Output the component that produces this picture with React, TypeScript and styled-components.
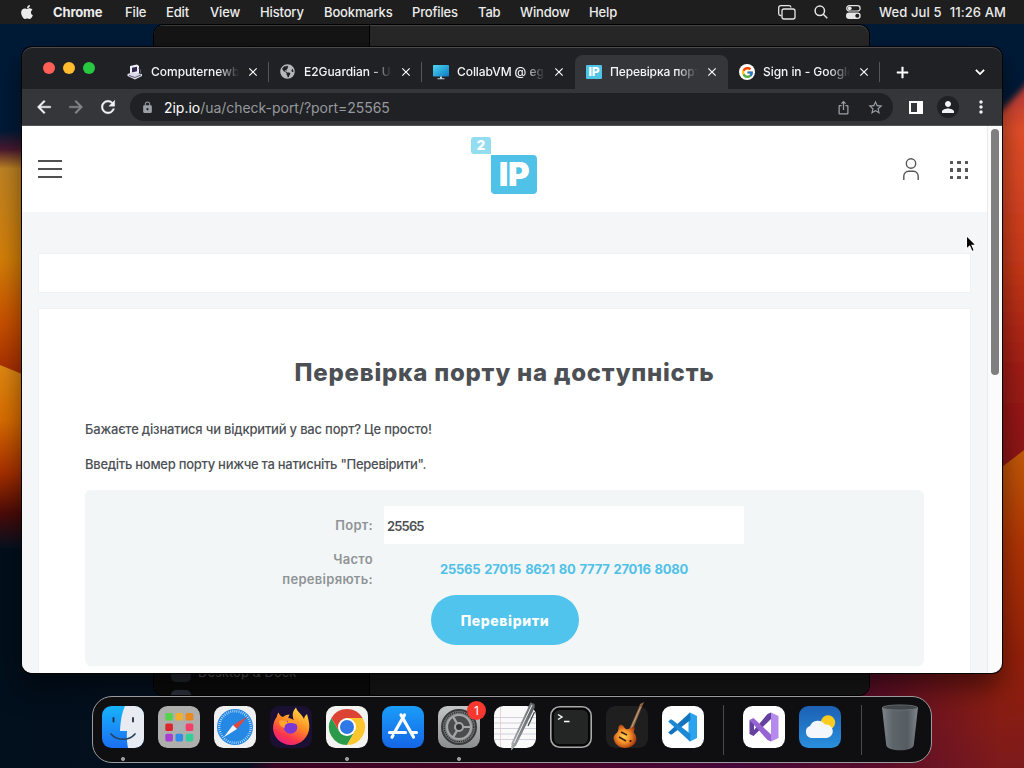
import React from "react";
import styled, { createGlobalStyle } from "styled-components";
import { FaApple, FaGlobeAmericas } from "react-icons/fa";
import { FcGoogle } from "react-icons/fc";
import {
  MdAdd,
  MdArrowBack,
  MdArrowForward,
  MdClose,
  MdExpandMore,
  MdIosShare,
  MdLock,
  MdMoreVert,
  MdPerson,
  MdRefresh,
  MdStarBorder,
} from "react-icons/md";

const GlobalStyle = createGlobalStyle`
  * { box-sizing: border-box; }
  body { margin: 0; overflow: hidden; background: #00142b; }
  button, input { font: inherit; border: 0; padding: 0; margin: 0; background: none; color: inherit; }
`;

const Desktop = styled.div`
  position: relative;
  width: 1024px;
  height: 768px;
  overflow: hidden;
  font-family: Inter, "Liberation Sans", sans-serif;
`;

const WallpaperSvg = styled.svg`
  position: absolute;
  inset: 0;
`;

/* ---------- menu bar ---------- */

const MenuBar = styled.header`
  position: relative;
  display: flex;
  align-items: center;
  height: 24px;
  padding: 0 18px 0 19px;
  background: #1e1e1f;
  color: #ececec;
  font-size: 13px;
  font-weight: 500;
  white-space: nowrap;
`;

const AppleMark = styled.span`
  display: flex;
  width: 34px;
  font-size: 16px;
`;

const MenuItem = styled.span<{ $w: number; $bold?: boolean; $ls?: number }>`
  width: ${(p) => p.$w}px;
  font-weight: ${(p) => (p.$bold ? 700 : 500)};
  letter-spacing: ${(p) => p.$ls ?? -0.15}px;
`;

const MenuStatus = styled.div`
  display: flex;
  align-items: center;
  margin-left: auto;
`;

const StatusIcon = styled.svg<{ $gap: number }>`
  display: block;
  margin-right: ${(p) => p.$gap}px;
`;

const Clock = styled.span`
  display: flex;
  gap: 8px;
  letter-spacing: 0.11px;
`;

/* ---------- windows ---------- */

const SettingsWindow = styled.section`
  position: absolute;
  left: 154px;
  top: 25px;
  width: 715px;
  height: 670px;
  display: flex;
  border-radius: 10px;
  overflow: hidden;
  background: linear-gradient(#272728, #1c1c1c 90%, #151515);
  box-shadow: 0 0 0 1px #000, inset 0 1px 0 #444;
`;

const SettingsSidebar = styled.div`
  display: flex;
  flex-direction: column;
  justify-content: flex-end;
  width: 216px;
  padding: 0 17px;
  background: linear-gradient(#151515, #0b0b0b);
  border-right: 1px solid #000;
  box-shadow: inset 0 1px 0 #3a3a3a;
`;

const SidebarEntry = styled.div`
  display: flex;
  align-items: center;
  gap: 7px;
  height: 28px;
  color: #56565a;
  font-size: 13px;
  transform: translateY(19px);
`;

const SidebarBadge = styled.span<{ $color: string }>`
  width: 20px;
  height: 20px;
  border-radius: 5px;
  background: ${(p) => p.$color};
`;

const BrowserWindow = styled.section`
  position: absolute;
  left: 22px;
  top: 47px;
  width: 980px;
  height: 626px;
  display: flex;
  flex-direction: column;
  border-radius: 10px;
  overflow: hidden;
  background: #202124;
`;

const WindowShadow = styled.div`
  position: absolute;
  left: 22px;
  top: 47px;
  width: 980px;
  height: 626px;
  border-radius: 10px;
  box-shadow: 0 0 0 1px #050505, 0 14px 28px rgba(0, 0, 0, 0.5);
`;

const TabStrip = styled.div`
  display: flex;
  align-items: flex-end;
  height: 42px;
  padding-left: 21px;
  box-shadow: inset 0 1px 0 #4a4b4e;
  border-radius: 10px 10px 0 0;
`;

const Lights = styled.div`
  display: flex;
  align-self: center;
  gap: 8px;
  width: 73px;
`;

const Light = styled.span<{ $color: string }>`
  width: 12px;
  height: 12px;
  border-radius: 50%;
  background: ${(p) => p.$color};
`;

const Tab = styled.div<{ $active?: boolean; $divider?: boolean; $w?: number }>`
  display: flex;
  align-items: center;
  width: ${(p) => p.$w ?? 153}px;
  height: 34px;
  padding: 0 9px 0 11px;
  border-radius: 8px 8px 0 0;
  background: ${(p) =>
    p.$active
      ? "#35363a"
      : p.$divider
        ? "linear-gradient(#54565a, #54565a) right 7px / 1px 20px no-repeat"
        : "none"};
`;

const TabIcon = styled.span`
  display: flex;
  flex: none;
  width: 16px;
  height: 16px;
`;

const TabTitle = styled.span<{ $ls?: number }>`
  flex: 1;
  margin: 0 7px 1px 8px;
  overflow: hidden;
  white-space: nowrap;
  color: #f4f5f6;
  font-size: 12px;
  font-weight: 500;
  letter-spacing: ${(p) => p.$ls ?? 0}px;
  mask-image: linear-gradient(90deg, #000 76%, transparent);
`;

const GoogleDisc = styled.span`
  display: flex;
  align-items: center;
  justify-content: center;
  width: 16px;
  height: 16px;
  border-radius: 50%;
  background: #fff;
  font-size: 13px;
`;

const IpFavicon = styled.span`
  width: 16px;
  height: 14px;
  margin-top: 1px;
  border-radius: 1px;
  background: #50c4e6;
  color: #fff;
  font-size: 12px;
  line-height: 14px;
  font-weight: 800;
  text-align: center;
`;

const TabStripButton = styled.button<{ $ml: number; $size: number }>`
  display: flex;
  align-self: center;
  margin: 8px 0 0 ${(p) => p.$ml}px;
  color: #fff;
  font-size: ${(p) => p.$size}px;

  path:not([fill="none"]) {
    stroke: currentColor;
    stroke-width: 0.6px;
  }
`;

const Toolbar = styled.div`
  display: flex;
  align-items: center;
  height: 37px;
  padding: 0 11px 0 12px;
  background: #35363a;
  border-bottom: 1px solid #515256;
  color: #f1f3f4;
`;

const NavButton = styled.button<{ $dim?: boolean }>`
  display: flex;
  flex: none;
  width: 32px;
  color: ${(p) => (p.$dim ? "#85868a" : "#f1f3f4")};
  font-size: 20px;

  path:not([fill="none"]) {
    stroke: currentColor;
    stroke-width: 0.5px;
  }
`;

const AddressBar = styled.div`
  display: flex;
  flex: 1;
  align-items: center;
  height: 28px;
  padding: 0 9px 0 11px;
  border-radius: 14px;
  background: #202124;
  color: #9aa0a6;
`;

const Url = styled.span`
  flex: 1;
  margin-left: 10px;
  font-size: 14px;
  letter-spacing: -0.03px;
  color: #96999d;
`;

const UrlHost = styled.span`
  color: #fff;
`;

const BarIcon = styled.span<{ $ml: number; $size: number }>`
  display: flex;
  margin-left: ${(p) => p.$ml}px;
  font-size: ${(p) => p.$size}px;
`;

const SidePanelGlyph = styled.span`
  flex: none;
  width: 14px;
  height: 13px;
  margin-left: 16px;
  border: 2px solid #fff;
  border-right-width: 6px;
`;

const Avatar = styled.span`
  display: flex;
  flex: none;
  align-items: center;
  justify-content: center;
  width: 22px;
  height: 22px;
  margin-left: 14px;
  border-radius: 50%;
  background: #202124;
  font-size: 18px;
`;

/* ---------- web page ---------- */

const Viewport = styled.div`
  display: flex;
  flex: 1;
  min-height: 0;
  background: #fbfbfb;
`;

const Page = styled.main`
  width: 966px;
  overflow: hidden;
  background: #f4f6f8;
  border-right: 1px solid #e9ebed;
  color: #4c5054;
`;

const ScrollTrack = styled.div`
  flex: 1;
  padding: 3px 3px 0;
`;

const ScrollThumb = styled.div`
  width: 8px;
  height: 246px;
  border-radius: 4px;
  background: #7f7f7f;
`;

const SiteHeader = styled.header`
  display: flex;
  align-items: center;
  justify-content: space-between;
  height: 86px;
  padding: 0 19px 0 16px;
  background: #fff;
`;

const Burger = styled.div`
  display: flex;
  flex-direction: column;
  justify-content: space-between;
  width: 145px;
  height: 18px;
`;

const BurgerLine = styled.span`
  width: 24px;
  height: 2px;
  background: #505050;
`;

const Logo = styled.div`
  display: flex;
  width: 66px;
  height: 57px;
  margin: 0 0 7px 42px;
`;

const LogoTwo = styled.span`
  width: 20px;
  height: 17px;
  border-radius: 3px 3px 0 3px;
  background: #93ddf0;
  color: #fff;
  font-size: 13px;
  font-weight: 900;
  line-height: 17px;
  text-align: center;
`;

const LogoIp = styled.span`
  align-self: flex-end;
  width: 46px;
  height: 39px;
  border-radius: 0 4px 4px 4px;
  background: #50c1e7;
  color: #fff;
  font-size: 33px;
  font-weight: 900;
  letter-spacing: -0.3px;
  line-height: 39px;
  text-align: center;
`;

const HeaderTools = styled.div`
  display: flex;
  align-items: center;
  justify-content: flex-end;
  gap: 31px;
  width: 185px;
`;

const DotGrid = styled.div`
  display: grid;
  grid-template-columns: repeat(3, 3.5px);
  gap: 4px;
  margin-top: 2px;
`;

const Dot = styled.span`
  width: 3.5px;
  height: 3.5px;
  border-radius: 0.5px;
  background: #555;
`;

const Banner = styled.div`
  height: 38px;
  margin: 42px 17px 0 17px;
  background: #fff;
  box-shadow: 0 0 0 1px #eff2f4;
`;

const Card = styled.section`
  height: 400px;
  margin: 17px 17px 0 17px;
  padding: 46px 46px 0;
  background: #fff;
  box-shadow: 0 0 0 1px #eff2f4;
`;

const Title = styled.h1`
  display: flex;
  justify-content: center;
  margin: 0;
  font-size: 24px;
  line-height: 36px;
  font-weight: 800;
  letter-spacing: 0.77px;
  white-space: nowrap;
`;

const Paragraph = styled.p<{ $mt: number; $ls: number }>`
  margin: ${(p) => p.$mt}px 0 0;
  font-size: 13px;
  line-height: 20px;
  font-weight: 500;
  letter-spacing: ${(p) => p.$ls}px;
  white-space: nowrap;
`;

const FormPanel = styled.form`
  display: grid;
  grid-template-columns: 288px 360px;
  column-gap: 11px;
  height: 176px;
  margin-top: 16px;
  padding-top: 16px;
  align-content: start;
  border-radius: 6px;
  background: #f2f6f7;
`;

const Label = styled.label<{ $h: number; $lift?: number }>`
  display: flex;
  align-items: center;
  justify-content: flex-end;
  height: ${(p) => p.$h}px;
  padding-bottom: ${(p) => p.$lift ?? 0}px;
  color: #8f9396;
  font-size: 13px;
  line-height: 20px;
  font-weight: 600;
  letter-spacing: 0.3px;
  text-align: right;
`;

const PortInput = styled.input`
  height: 38px;
  padding: 1px 3px 0;
  background: #fff;
  color: #4c5054;
  font-size: 13px;
  font-weight: 600;
  letter-spacing: -0.85px;
`;

const PortLinks = styled.div`
  display: flex;
  align-items: center;
  justify-content: center;
  gap: 4px;
  padding-bottom: 1px;
  color: #50c1e7;
  font-size: 13px;
  font-weight: 700;
  letter-spacing: -0.26px;
`;

const SubmitButton = styled.button`
  grid-column: 1 / -1;
  width: 148px;
  height: 50px;
  margin: 0 0 0 346px;
  border-radius: 25px;
  background: #50c4ec;
  color: #fff;
  font-size: 14px;
  font-weight: 800;
  letter-spacing: 0.6px;
`;

/* ---------- dock ---------- */

const Dock = styled.nav`
  position: absolute;
  left: 92px;
  top: 696px;
  width: 840px;
  height: 67px;
  display: flex;
  gap: 14px;
  padding: 9px 9px 0;
  border: 1px solid #9c9c9e;
  border-radius: 20px;
  background: #0f0f11;
`;

const DockSlot = styled.div<{ $running?: boolean }>`
  position: relative;
  flex: none;
  width: 42px;
  height: 55px;
  background: ${(p) =>
    p.$running
      ? "radial-gradient(circle at 50% 53px, #9a9a9a 1.6px, transparent 2.3px)"
      : "none"};
`;

const DockArt = styled.svg`
  display: block;
  overflow: visible;
`;

const DockDivider = styled.span`
  flex: none;
  width: 1px;
  height: 50px;
  margin: -1px 5px 0;
  background: #4a4a4c;

  &:last-of-type {
    margin-left: 6px;
  }
`;

const Notification = styled.span`
  position: absolute;
  right: -6px;
  top: -5px;
  width: 19px;
  height: 19px;
  border-radius: 50%;
  background: #f8382f;
  color: #fff;
  font-size: 12px;
  line-height: 19px;
  text-align: center;
`;

const Pointer = styled.svg`
  position: absolute;
  left: 965px;
  top: 234px;
`;

/* ---------- drawings ---------- */

const Wallpaper = () => (
  <WallpaperSvg width="1024" height="768" viewBox="0 0 1024 768">
    <defs>
      <linearGradient id="wl" x1="0" x2="0" y1="130" y2="560" gradientUnits="userSpaceOnUse">
        <stop offset="0" stopColor="#001a36" />
        <stop offset="0.045" stopColor="#4a1930" />
        <stop offset="0.09" stopColor="#c08423" />
        <stop offset="0.3" stopColor="#d58008" />
        <stop offset="0.45" stopColor="#c95000" />
        <stop offset="0.57" stopColor="#a52c00" />
      </linearGradient>
      <linearGradient id="wl2" x1="0" x2="0" y1="365" y2="550" gradientUnits="userSpaceOnUse">
        <stop offset="0" stopColor="#e08a12" />
        <stop offset="0.3" stopColor="#d96c00" />
        <stop offset="0.58" stopColor="#a83000" />
        <stop offset="0.8" stopColor="#4d0b08" />
        <stop offset="1" stopColor="#021120" />
      </linearGradient>
      <linearGradient id="wr" x1="0" x2="0" y1="90" y2="470" gradientUnits="userSpaceOnUse">
        <stop offset="0" stopColor="#b83a3a" />
        <stop offset="0.1" stopColor="#e4502a" />
        <stop offset="0.45" stopColor="#c93a1a" />
        <stop offset="0.75" stopColor="#a01c12" />
        <stop offset="1" stopColor="#8a1414" />
      </linearGradient>
      <linearGradient id="wr2" x1="0" x2="0" y1="450" y2="768" gradientUnits="userSpaceOnUse">
        <stop offset="0" stopColor="#c45a08" />
        <stop offset="0.3" stopColor="#b03404" />
        <stop offset="0.65" stopColor="#94200a" />
        <stop offset="1" stopColor="#7c1a1c" />
      </linearGradient>
      <linearGradient id="wb" x1="0" x2="1024" y1="0" y2="0" gradientUnits="userSpaceOnUse">
        <stop offset="0" stopColor="#020f1c" />
        <stop offset="0.24" stopColor="#04101f" />
        <stop offset="0.27" stopColor="#3a0322" />
        <stop offset="0.5" stopColor="#4a0526" />
        <stop offset="0.72" stopColor="#46083a" />
        <stop offset="0.85" stopColor="#5a0d2a" />
        <stop offset="1" stopColor="#5e102a" />
      </linearGradient>
      <linearGradient id="wd" x1="850" x2="1000" y1="0" y2="0" gradientUnits="userSpaceOnUse">
        <stop offset="0" stopColor="#520a2c" />
        <stop offset="1" stopColor="#520a2c" stopOpacity="0" />
      </linearGradient>
      <filter id="soft" x="-20%" y="-20%" width="140%" height="140%">
        <feGaussianBlur stdDeviation="3" />
      </filter>
    </defs>
    <rect width="1024" height="768" fill="#001a36" />
    <rect x="0" y="130" width="200" height="320" fill="url(#wl)" />
    <path d="M0 365 L22 374 L120 400 V560 H0Z" fill="url(#wl2)" />
    <path d="M1060 50 L985 128 V480 H1060Z" fill="url(#wr)" filter="url(#soft)" />
    <rect x="0" y="548" width="1024" height="220" fill="url(#wb)" />
    <path d="M1024 450 L1002 467 L850 600 V768 H1024Z" fill="url(#wr2)" />
    <rect x="850" y="600" width="174" height="168" fill="url(#wd)" />
  </WallpaperSvg>
);

const Tile = ({ fill }: { fill: string }) => <rect width="42" height="42" rx="9.5" fill={fill} />;

const FinderArt = () => (
  <DockArt width="42" height="42">
    <defs>
      <linearGradient id="fin" x1="0" x2="0" y1="0" y2="1">
        <stop offset="0" stopColor="#17b3fb" />
        <stop offset="1" stopColor="#1b6ef3" />
      </linearGradient>
    </defs>
    <Tile fill="url(#fin)" />
    <path d="M23 0 H32.5 A9.5 9.5 0 0 1 42 9.5 V32.5 A9.5 9.5 0 0 1 32.5 42 H26 C25 37 24.5 31 25 25 H18 C18.5 15 20 6 23 0Z" fill="#e8ebf1" />
    <path d="M11.5 12v3.500M31 12v3.500" stroke="#1c2c40" strokeWidth="1.800" strokeLinecap="round" />
    <path d="M9 28 C15 35 27 35 33 28" stroke="#24435f" strokeWidth="1.700" fill="none" strokeLinecap="round" />
  </DockArt>
);

const launchColors = ["#55d34e", "#f0b02c", "#e88a1e", "#d9252b", "#aab0b5", "#f43f68", "#a83fd0", "#2f8ce8", "#33cf96"];

const LaunchpadArt = () => (
  <DockArt width="42" height="42">
    <Tile fill="#aeaeac" />
    {launchColors.map((color, i) => (
      <rect key={color} x={7.3 + (i % 3) * 10.2} y={7 + Math.floor(i / 3) * 10.4} width="7.600" height="7.600" rx="1.600" fill={color} />
    ))}
  </DockArt>
);

const SafariArt = () => (
  <DockArt width="42" height="42">
    <Tile fill="#f0f0f1" />
    <circle cx="21" cy="21" r="18" fill="#2488e4" />
    <circle cx="21" cy="21" r="15.800" fill="none" stroke="#d8ecff" strokeWidth="2.400" strokeDasharray="0.700 1.400" />
    <path d="M33.500 10.500 L23 23 L19 19Z" fill="#e0473d" />
    <path d="M9.500 31.500 L23 23 L19 19Z" fill="#f1f3f5" />
  </DockArt>
);

const FirefoxArt = () => (
  <DockArt width="42" height="42">
    <defs>
      <linearGradient id="fx" x1="0.800" x2="0.300" y1="0" y2="1">
        <stop offset="0" stopColor="#ffe443" />
        <stop offset="0.450" stopColor="#ff8a24" />
        <stop offset="0.800" stopColor="#fb3250" />
        <stop offset="1" stopColor="#e5218a" />
      </linearGradient>
    </defs>
    <Tile fill="#1a1033" />
    <path d="M26 1.500 C27 6 32 8 34 13 C34.500 11 35 9.500 37 8 C38 12 39.500 16 39.300 21 C39 31 31 39 21 39 C11 39 3 31 3 22 C3 17 5 13 7 10.500 C7 9 7.500 8 8.500 6.500 C9.500 9 11 10.500 13 11 C14.500 9.500 17 8.500 19.500 8.500 L18 12.500 C20 14.500 23 14 24 15 C21 7 24 4 26 1.500Z" fill="url(#fx)" />
    <circle cx="20.500" cy="21" r="6.800" fill="#7b36d4" />
    <path d="M9 15 C12 13.500 16 14.500 18.500 17 C15.500 18 14.500 19.500 14.500 22 C11.500 21 9 19 9 15Z" fill="#ffa52d" />
    <path d="M18 12 C22 12.500 26 14 28.500 19.500 C25 16.500 21 17.500 18 17Z" fill="#ff9a2a" />
  </DockArt>
);

const ChromeArt = () => (
  <DockArt width="42" height="42">
    <Tile fill="#f3f3f1" />
    <path d="M5.400 12 A18 18 0 0 0 21 39 L29 25 L13.500 25.500Z" fill="#2b9a4a" />
    <path d="M36.600 12 A18 18 0 0 1 21 39 L29 25 L21 12Z" fill="#fcc62c" />
    <path d="M5.400 12 A18 18 0 0 1 36.600 12 H21 L13.500 25.500Z" fill="#dd4335" />
    <circle cx="21" cy="21" r="9" fill="#fff" />
    <circle cx="21" cy="21" r="7" fill="#2f78e6" />
  </DockArt>
);

const AppStoreArt = () => (
  <DockArt width="42" height="42">
    <defs>
      <linearGradient id="as" x1="0" x2="0" y1="0" y2="1">
        <stop offset="0" stopColor="#1a9df8" />
        <stop offset="1" stopColor="#1566e6" />
      </linearGradient>
    </defs>
    <Tile fill="url(#as)" />
    <g stroke="#fff" strokeWidth="3.200" strokeLinecap="round">
      <path d="M22.500 9 L13 25.500M19 9 L31.500 31M7.500 26.500 H23.500M29.500 26.500 H34.500M11 29.500 L10 31.200" />
    </g>
  </DockArt>
);

const SettingsArt = () => (
  <DockArt width="42" height="42">
    <defs>
      <linearGradient id="st" x1="0" x2="0" y1="0" y2="1">
        <stop offset="0" stopColor="#c4c5c6" />
        <stop offset="1" stopColor="#8c8d8f" />
      </linearGradient>
    </defs>
    <Tile fill="url(#st)" />
    <circle cx="21" cy="21" r="17" fill="#77787a" stroke="#3a3b3d" strokeWidth="2" />
    <circle cx="21" cy="21" r="14.700" fill="none" stroke="#2f3032" strokeWidth="1.400" strokeDasharray="1.200 1" />
    <circle cx="21" cy="21" r="12" fill="#4b4c4e" stroke="#a5a6a8" strokeWidth="2.200" />
    <circle cx="21" cy="21" r="4" fill="#333" stroke="#a5a6a8" strokeWidth="2" />
    <path d="M25 21 H33M19 17.400 L15 10.600M19 24.600 L15 31.400" stroke="#a5a6a8" strokeWidth="2.200" />
  </DockArt>
);

const TextEditArt = () => (
  <DockArt width="42" height="42">
    <defs>
      <linearGradient id="pen" x1="0" x2="1" y1="0" y2="0.400">
        <stop offset="0" stopColor="#e2e3e4" />
        <stop offset="0.500" stopColor="#8c8f92" />
        <stop offset="1" stopColor="#45484b" />
      </linearGradient>
    </defs>
    <Tile fill="#fafafa" />
    <path d="M0 11.500H42M0 17H42M0 22.500H42M0 28H42M0 33.500H42" stroke="#c9cdd4" strokeWidth="0.900" />
    <path d="M6.500 1V41" stroke="#e9c8c8" strokeWidth="0.800" />
    <path d="M36.500 -3.500 L40.500 -2 L41 1 L22 39.500 L17.200 44.500 L17.500 37Z" fill="url(#pen)" />
    <path d="M38 -1 L20 37" stroke="#eee" strokeWidth="1" />
    <path d="M40.500 6 L34 20" stroke="#3c3f42" strokeWidth="1.200" />
  </DockArt>
);

const TerminalArt = () => (
  <DockArt width="42" height="42">
    <rect x="0.800" y="0.800" width="40.400" height="40.400" rx="9" fill="#060606" stroke="#a9a9a9" strokeWidth="1.600" />
    <rect x="4" y="4" width="34" height="34" rx="5.500" fill="#242525" />
    <path d="M8 8.500 L12 11 L8 13.500M14 15.500H19.500" stroke="#fff" strokeWidth="1.400" fill="none" />
  </DockArt>
);

const GarageBandArt = () => (
  <DockArt width="42" height="42">
    <defs>
      <radialGradient id="gb" cx="0.450" cy="0.500" r="0.600">
        <stop offset="0" stopColor="#ffd255" />
        <stop offset="0.500" stopColor="#ef8a26" />
        <stop offset="1" stopColor="#98260c" />
      </radialGradient>
    </defs>
    <Tile fill="#1f1f20" />
    <path d="M22 26 L33 1 L34 -2 L38 -4 L37 -1.500 L35.500 2 L25 28Z" fill="#8d6240" />
    <path d="M23.500 26 L34.500 1" stroke="#cdb79c" strokeWidth="0.800" />
    <path d="M8 34 C6 29 11 28 12 25 C13 22 12 20 14 19 C17 18 18 22 20 23 C23 24 25 21 28 21 C30 22 27 25 28 27 C32 31 31 37 26 40 C20 44 10 42 8 34Z" fill="url(#gb)" />
    <path d="M15 26 L21 29M13 31 L20 35" stroke="#40210f" strokeWidth="1.600" />
    <circle cx="24.500" cy="35" r="1.100" fill="#2b1408" />
  </DockArt>
);

const VsCodeArt = () => (
  <DockArt width="42" height="42">
    <Tile fill="#fff" />
    <path d="M28 6.500 L35 10 V32 L28 35.500 L26.500 34 V8Z" fill="#2ba3ee" />
    <path d="M28 6.500 L6.200 26.500 L8.500 28.600 H9.800 L28.500 14Z" fill="#1274be" />
    <path d="M28 35.500 L6.200 15.500 L8.500 13.400 H9.800 L28.500 28Z" fill="#1a88d4" />
  </DockArt>
);

const VisualStudioArt = () => (
  <DockArt width="42" height="42">
    <Tile fill="#fff" />
    <path d="M6.500 14 V28 L10.500 30 L28 13 V6.500 L24.500 8 L11 24 V18Z" fill="#65409f" />
    <path d="M6.500 14 L10.500 12 L28 28.500 V35.500 L24.500 34 L6.500 14Z" fill="#9563d2" />
    <path d="M28 6.500 L35.500 10 V32 L28 35.500Z" fill="#b48aec" />
  </DockArt>
);

const WeatherArt = () => (
  <DockArt width="42" height="42">
    <defs>
      <linearGradient id="sky" x1="0" x2="0" y1="0" y2="1">
        <stop offset="0" stopColor="#1c60b4" />
        <stop offset="1" stopColor="#2a8fdc" />
      </linearGradient>
    </defs>
    <Tile fill="url(#sky)" />
    <circle cx="29" cy="16.500" r="7.200" fill="#fbcb1d" />
    <path d="M12.500 32 A6.200 6.200 0 0 1 11 20 A8.500 8.500 0 0 1 26 18.500 A6.800 6.800 0 0 1 28 32Z" fill="#f3f7fc" />
  </DockArt>
);

const TrashArt = () => (
  <DockArt width="38" height="48" viewBox="0 0 40 48" preserveAspectRatio="none">
    <defs>
      <linearGradient id="bin" x1="0" x2="1" y1="0" y2="0">
        <stop offset="0" stopColor="#7f868b" />
        <stop offset="0.300" stopColor="#5d646a" />
        <stop offset="0.700" stopColor="#555c62" />
        <stop offset="1" stopColor="#80868b" />
      </linearGradient>
    </defs>
    <path d="M1 1 H39 L34.500 39 C34 46 6 46 5.500 39Z" fill="url(#bin)" />
    <ellipse cx="20" cy="1.500" rx="18.500" ry="2.600" fill="#41474b" stroke="#70767a" strokeWidth="0.800" />
  </DockArt>
);

const ComputerFavicon = () => (
  <svg width="16" height="16" viewBox="0 0 16 16">
    <path d="M3 2 L10 0.500 L12 2 V9.500 L5.500 11 L3 9.500Z" fill="#eeecf6" />
    <path d="M5 3.800 L10 2.800 V7.300 L5 8.500Z" fill="#32284e" />
    <path d="M0.500 10 L5 8.500 L15 10 V12 L8 15.500 L0.500 12Z" fill="#dddbe8" />
    <path d="M2 11.500 L8 13.500 L14 10.800M11.500 4 L13.500 6 V9" stroke="#5b5773" strokeWidth="1" fill="none" />
  </svg>
);

const MonitorFavicon = () => (
  <svg width="16" height="16" viewBox="0 0 16 16">
    <defs>
      <linearGradient id="mon" x1="0" x2="1" y1="0" y2="1">
        <stop offset="0" stopColor="#4fd8ee" />
        <stop offset="1" stopColor="#0b78c8" />
      </linearGradient>
    </defs>
    <rect y="1" width="16" height="11.500" rx="0.800" fill="url(#mon)" />
    <path d="M7 12.500h2v2H7zM4.500 14.300h7v1h-7z" fill="#c6d2da" />
  </svg>
);

const tabs = [
  { title: "Computernewb's", icon: <ComputerFavicon />, divider: true, ls: -0.02 },
  { title: "E2Guardian - Una", icon: <FaGlobeAmericas size={15} color="#b6b8bb" />, divider: true, ls: -0.05 },
  { title: "CollabVM @ egree", icon: <MonitorFavicon />, ls: -0.08 },
  { title: "Перевірка порту", icon: <IpFavicon>IP</IpFavicon>, active: true, ls: -0.12 },
  { title: "Sign in - Google", icon: <GoogleDisc><FcGoogle /></GoogleDisc>, divider: true, w: 152, ls: -0.05 },
];

const menus: [string, number][] = [
  ["File", 41],
  ["Edit", 44],
  ["View", 50],
  ["History", 64],
  ["Bookmarks", 88],
  ["Profiles", 66],
  ["Tab", 42],
  ["Window", 69],
  ["Help", 40],
];

const popularPorts = ["25565", "27015", "8621", "80", "7777", "27016", "8080"];

export default function App() {
  return (
    <Desktop>
      <GlobalStyle />
      <Wallpaper />
      <MenuBar>
        <AppleMark><FaApple /></AppleMark>
        <MenuItem $w={72} $bold>Chrome</MenuItem>
        {menus.map(([name, w]) => (
          <MenuItem key={name} $w={w}>{name}</MenuItem>
        ))}
        <MenuStatus>
          <StatusIcon $gap={18} width="18" height="15" fill="none" stroke="#e6e6e6" strokeWidth="1.300">
            <path d="M3.500 10.500 H2.500 A2 2 0 0 1 0.700 8.700 V2.700 A2 2 0 0 1 2.700 0.700 H11 A2 2 0 0 1 13 2.500" />
            <rect x="4" y="4" width="13" height="10" rx="2" />
          </StatusIcon>
          <StatusIcon $gap={18} width="14" height="14" fill="none" stroke="#e6e6e6" strokeWidth="1.500">
            <circle cx="5.800" cy="5.800" r="4.700" />
            <path d="M9.300 9.300 L13.300 13.300" />
          </StatusIcon>
          <StatusIcon $gap={18} width="15" height="14">
            <rect x="0.700" y="0.700" width="13.400" height="5.300" rx="2.600" fill="none" stroke="#e6e6e6" strokeWidth="1.200" />
            <circle cx="3.700" cy="3.300" r="1.900" fill="#e6e6e6" />
            <rect y="7.500" width="14.700" height="6.400" rx="3.200" fill="#e6e6e6" />
            <circle cx="11.300" cy="10.700" r="2" fill="#1e1e1f" />
          </StatusIcon>
          <Clock><span>Wed Jul 5</span><span>11:26 AM</span></Clock>
        </MenuStatus>
      </MenuBar>

      <SettingsWindow>
        <SettingsSidebar>
          <SidebarEntry><SidebarBadge $color="#22262e" />Desktop &amp; Dock</SidebarEntry>
          <SidebarEntry><SidebarBadge $color="#2c303c" /></SidebarEntry>
        </SettingsSidebar>
      </SettingsWindow>

      <WindowShadow />
      <BrowserWindow>
        <TabStrip>
          <Lights>
            <Light $color="#ff5f57" />
            <Light $color="#febc2e" />
            <Light $color="#28c840" />
          </Lights>
          {tabs.map((tab) => (
            <Tab key={tab.title} $active={tab.active} $divider={tab.divider} $w={tab.w}>
              <TabIcon>{tab.icon}</TabIcon>
              <TabTitle $ls={tab.ls}>{tab.title}</TabTitle>
              <MdClose size={14} color="#fff" />
            </Tab>
          ))}
          <TabStripButton $ml={13} $size={19}><MdAdd /></TabStripButton>
          <TabStripButton $ml={59} $size={18}><MdExpandMore /></TabStripButton>
        </TabStrip>
        <Toolbar>
          <NavButton><MdArrowBack /></NavButton>
          <NavButton $dim><MdArrowForward /></NavButton>
          <NavButton><MdRefresh /></NavButton>
          <AddressBar>
            <MdLock size={13} />
            <Url><UrlHost>2ip.io</UrlHost>/ua/check-port/?port=25565</Url>
            <BarIcon $ml={0} $size={15}><MdIosShare /></BarIcon>
            <BarIcon $ml={16} $size={17}><MdStarBorder /></BarIcon>
          </AddressBar>
          <SidePanelGlyph />
          <Avatar><MdPerson /></Avatar>
          <BarIcon $ml={12} $size={20}><MdMoreVert /></BarIcon>
        </Toolbar>
        <Viewport>
          <Page>
            <SiteHeader>
              <Burger><BurgerLine /><BurgerLine /><BurgerLine /></Burger>
              <Logo><LogoTwo>2</LogoTwo><LogoIp>IP</LogoIp></Logo>
              <HeaderTools>
                <svg width="16" height="23" fill="none" stroke="#555" strokeWidth="1.400">
                  <circle cx="8" cy="5.500" r="4.700" />
                  <path d="M0.800 22 V18 A5 5 0 0 1 5.500 13.200 H10.500 A5 5 0 0 1 15.200 18 V22" />
                </svg>
                <DotGrid>
                  {Array.from({ length: 9 }, (_, i) => <Dot key={i} />)}
                </DotGrid>
              </HeaderTools>
            </SiteHeader>
            <Banner />
            <Card>
              <Title>Перевірка порту на доступність</Title>
              <Paragraph $mt={28} $ls={-0.2}>Бажаєте дізнатися чи відкритий у вас порт? Це просто!</Paragraph>
              <Paragraph $mt={15} $ls={-0.27}>Введіть номер порту нижче та натисніть "Перевірити".</Paragraph>
              <FormPanel>
                <Label $h={38} $lift={1}>Порт:</Label>
                <PortInput defaultValue="25565" />
                <Label $h={51} $lift={1}>Часто<br />перевіряють:</Label>
                <PortLinks>
                  {popularPorts.map((port) => <span key={port}>{port}</span>)}
                </PortLinks>
                <SubmitButton type="button">Перевірити</SubmitButton>
              </FormPanel>
            </Card>
          </Page>
          <ScrollTrack><ScrollThumb /></ScrollTrack>
        </Viewport>
      </BrowserWindow>

      <Dock>
        <DockSlot $running><FinderArt /></DockSlot>
        <DockSlot><LaunchpadArt /></DockSlot>
        <DockSlot><SafariArt /></DockSlot>
        <DockSlot><FirefoxArt /></DockSlot>
        <DockSlot $running><ChromeArt /></DockSlot>
        <DockSlot><AppStoreArt /></DockSlot>
        <DockSlot $running><SettingsArt /><Notification>1</Notification></DockSlot>
        <DockSlot><TextEditArt /></DockSlot>
        <DockSlot><TerminalArt /></DockSlot>
        <DockSlot><GarageBandArt /></DockSlot>
        <DockSlot><VsCodeArt /></DockSlot>
        <DockDivider />
        <DockSlot><VisualStudioArt /></DockSlot>
        <DockSlot><WeatherArt /></DockSlot>
        <DockDivider />
        <DockSlot><TrashArt /></DockSlot>
      </Dock>

      <Pointer width="13" height="20" viewBox="0 0 13 20">
        <path d="M1.500 1.500 V15 L4.700 12.200 L7 17.500 L9.300 16.500 L7 11.400 H11.200Z" fill="#000" stroke="#fff" strokeWidth="1.100" />
      </Pointer>
    </Desktop>
  );
}
